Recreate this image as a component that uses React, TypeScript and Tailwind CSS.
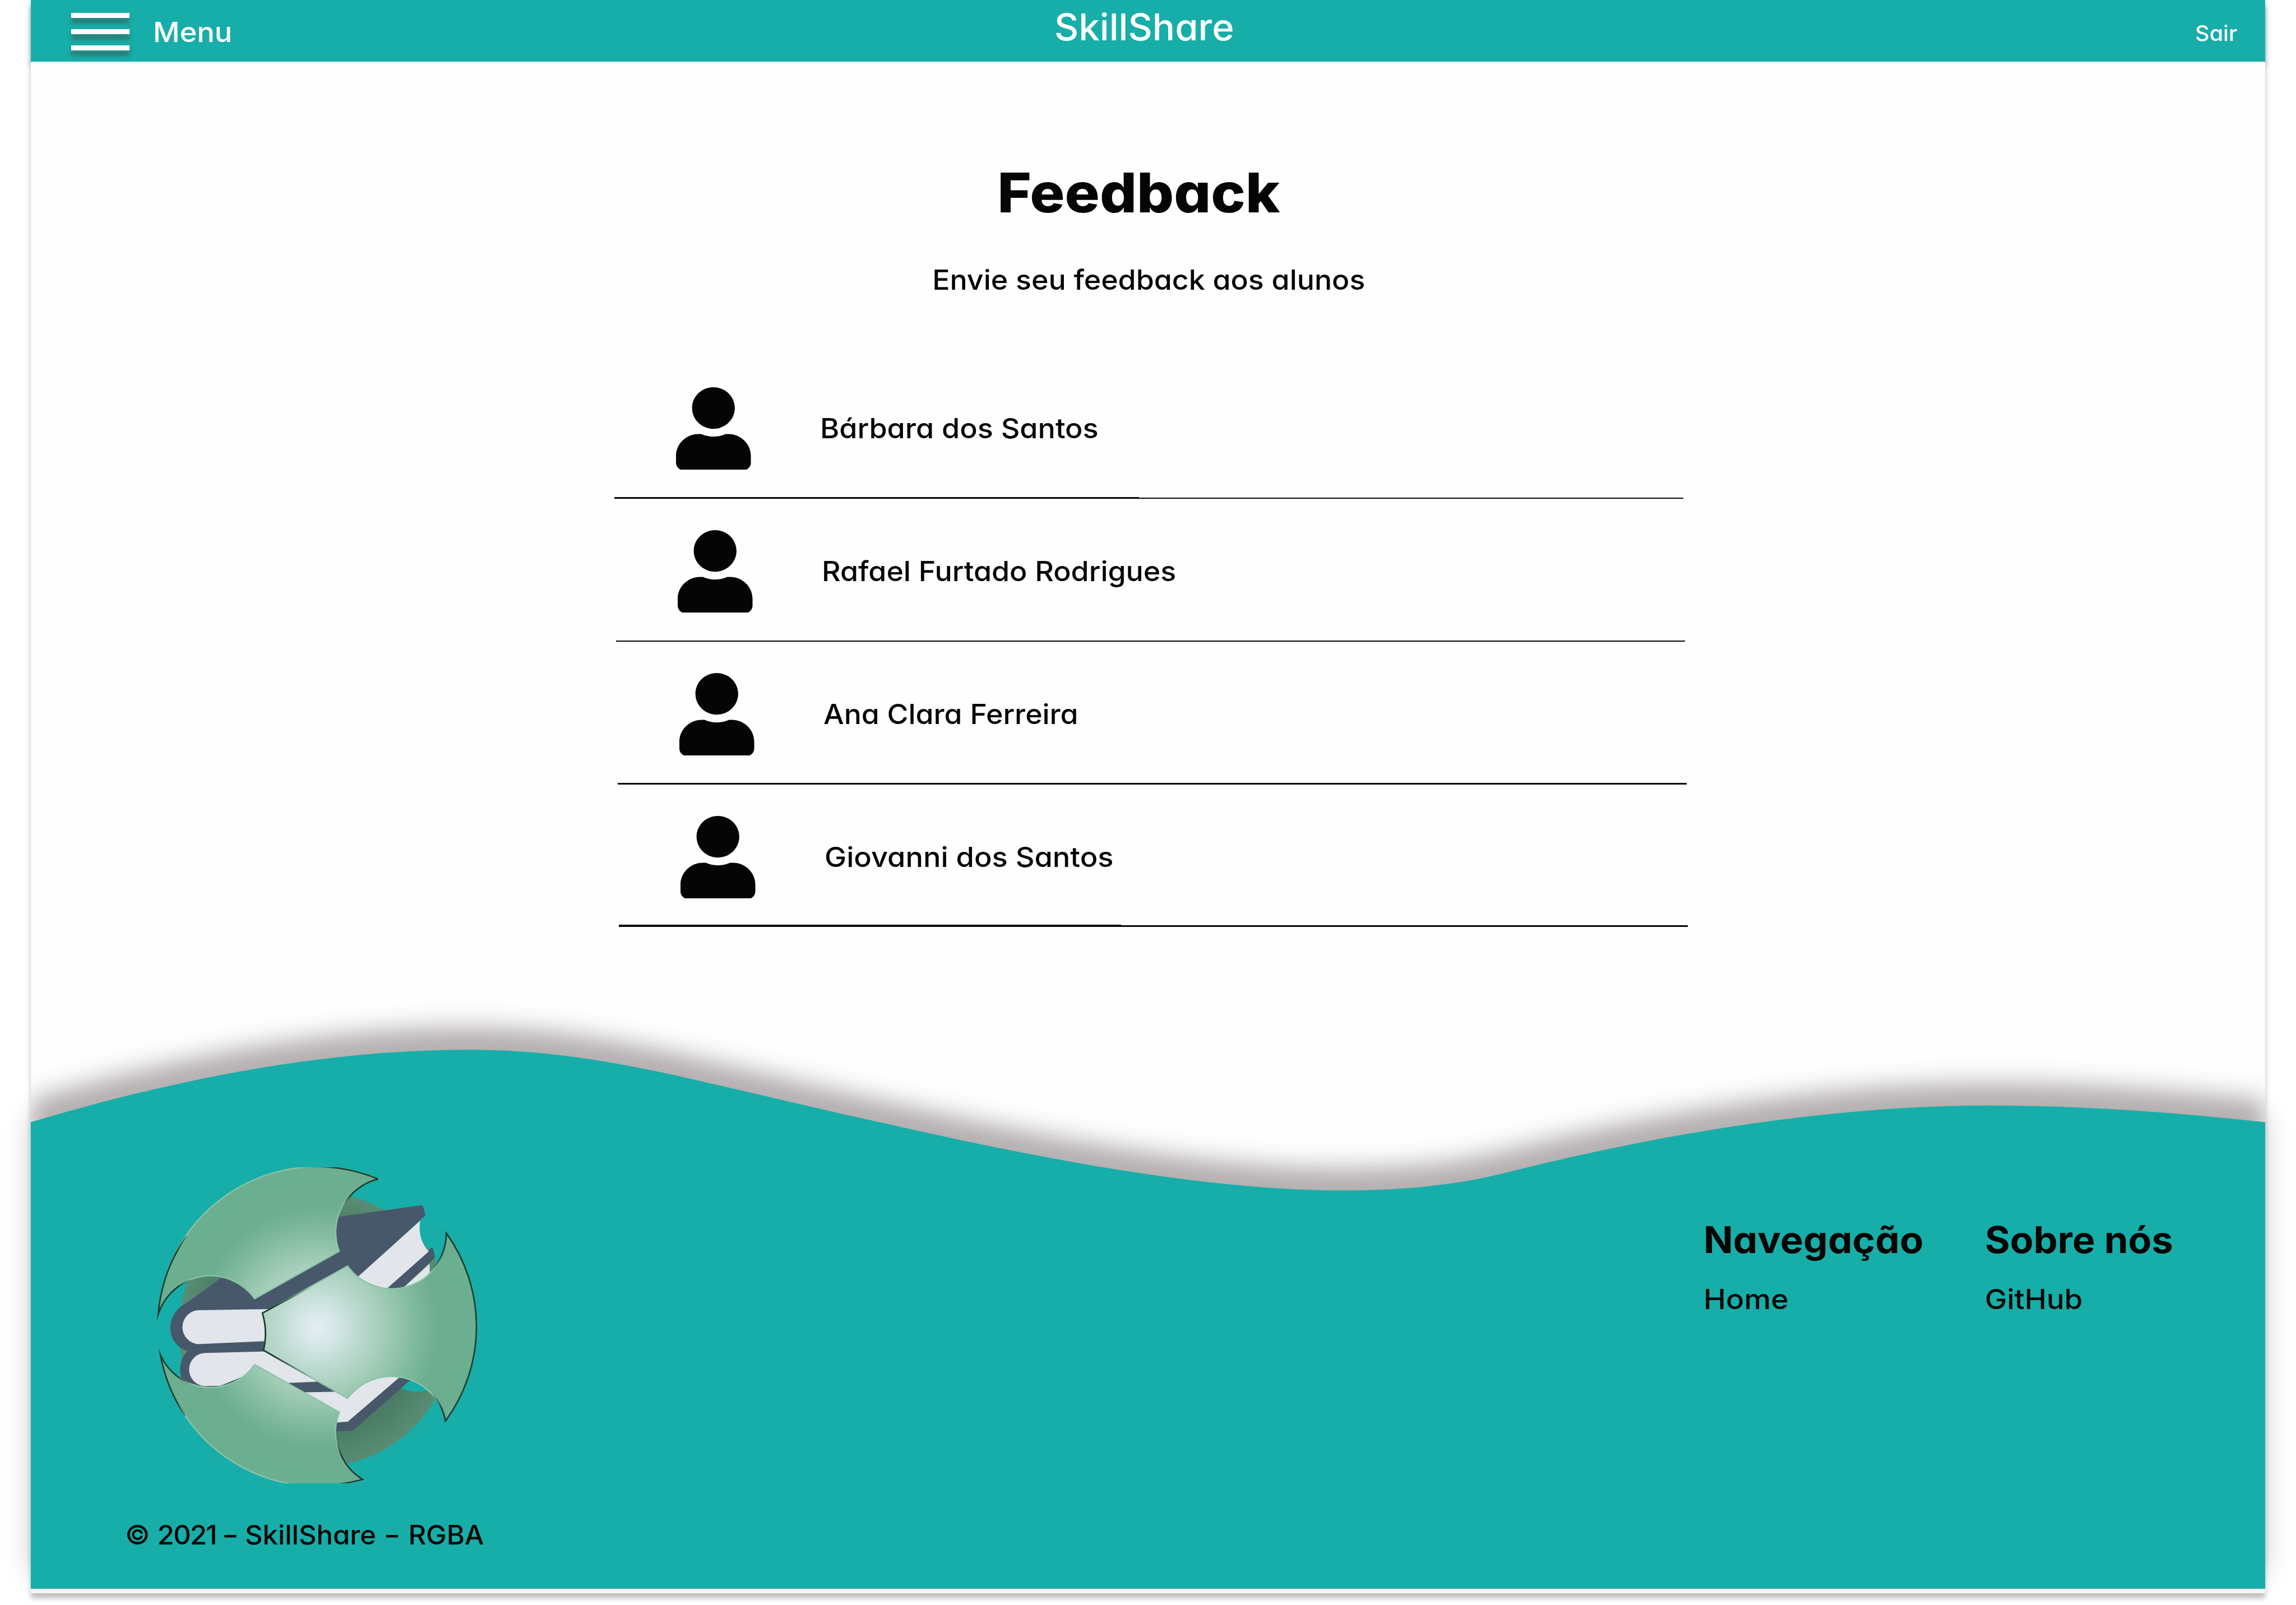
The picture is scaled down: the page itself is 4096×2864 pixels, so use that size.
type Student = {
  name: string;
  row: string;
  text: string;
  line: React.ReactNode;
};

const students: Student[] = [
  {
    name: "Bárbara dos Santos",
    row: "h-[255px] ml-0",
    text: "scale-x-[1.042]",
    line: (
      <>
        <div className="h-[3px] w-[936px] bg-[#050505]" />
        <div className="h-[2px] grow bg-[#050505]" />
      </>
    ),
  },
  {
    name: "Rafael Furtado Rodrigues",
    row: "h-[255px] ml-[3px]",
    text: "scale-x-[1.038]",
    line: <div className="h-[2px] grow bg-[#050505]" />,
  },
  {
    name: "Ana Clara Ferreira",
    row: "h-[255px] ml-[6px]",
    text: "scale-x-[1.035]",
    line: <div className="h-[3px] grow bg-[#050505]" />,
  },
  {
    name: "Giovanni dos Santos",
    row: "h-[254px] ml-[8px]",
    text: "scale-x-[1.047]",
    line: (
      <>
        <div className="h-[4px] w-[896px] bg-[#050505]" />
        <div className="h-[3px] grow bg-[#050505]" />
      </>
    ),
  },
];

function UserIcon() {
  return (
    <svg
      className="mt-[56px] h-[147px] w-[133.5px] shrink-0"
      viewBox="0 0 448 507"
      preserveAspectRatio="none"
      fill="#050505"
    >
      <path d="M224 256c70.7 0 128-57.3 128-128S294.7 0 224 0 96 57.3 96 128s57.3 128 128 128zm89.6 32h-16.7c-22.2 10.2-46.9 16-72.9 16s-50.6-5.8-72.9-16h-16.7C60.2 288 0 348.2 0 422.4V464c0 26.5 21.5 48 48 48h352c26.5 0 48-21.5 48-48v-41.6c0-74.2-60.2-134.4-134.4-134.4z" />
    </svg>
  );
}

function Wave() {
  return (
    <svg
      className="absolute inset-0 h-full w-full"
      viewBox="73 2300 5281 1456"
      preserveAspectRatio="none"
    >
      <defs>
        <filter id="waveShadow" filterUnits="userSpaceOnUse" x="-60" y="2250" width="5560" height="1560" colorInterpolationFilters="sRGB">
          <feDropShadow dx="0" dy="-53" stdDeviation="28" floodColor="#150508" floodOpacity="0.32" />
        </filter>
      </defs>
      <path
        filter="url(#waveShadow)"
        fill="#17aea9"
        d="M73 2653C400 2556 750 2481.700 1110 2481.700C1290 2481.700 1444 2509.500 1594 2541.700C2090 2654 2700 2814.300 3174.600 2814.300C3320 2814.300 3440 2802 3556 2773.300C3886 2690 4300 2613.800 4698.600 2613.800C4920 2613.800 5130 2629 5354 2653V3800H73Z"
      />
    </svg>
  );
}

function Logo() {
  return (
    <svg className="h-[619px] w-[619px]" viewBox="0 0 1568 1568" fill="none">
      <defs>
        <radialGradient id="blade" gradientUnits="userSpaceOnUse" cx="785" cy="800" r="722">
          <stop offset="0" stopColor="#e4edf6" />
          <stop offset="0.1" stopColor="#d8e8ea" />
          <stop offset="0.25" stopColor="#bddad0" />
          <stop offset="0.45" stopColor="#9dc9b3" />
          <stop offset="0.6" stopColor="#82bb9f" />
          <stop offset="0.75" stopColor="#6dae90" />
          <stop offset="1" stopColor="#6bae90" />
        </radialGradient>
        <radialGradient id="disc" gradientUnits="userSpaceOnUse" cx="780" cy="810" r="622">
          <stop offset="0.75" stopColor="#4b7c65" />
          <stop offset="1" stopColor="#588d74" />
        </radialGradient>
        <linearGradient id="fadeRight" gradientUnits="userSpaceOnUse" x1="1300" y1="0" x2="1345" y2="0">
          <stop offset="0" stopColor="#1c3e32" stopOpacity="0" />
          <stop offset="1" stopColor="#1c3e32" />
        </linearGradient>
        <linearGradient id="fadeInner" gradientUnits="userSpaceOnUse" x1="760" y1="0" x2="590" y2="0">
          <stop offset="0" stopColor="#1c3e32" stopOpacity="0" />
          <stop offset="1" stopColor="#1c3e32" />
        </linearGradient>
        <linearGradient id="fadeLeft" gradientUnits="userSpaceOnUse" x1="215" y1="0" x2="150" y2="0">
          <stop offset="0" stopColor="#1c3e32" stopOpacity="0" />
          <stop offset="1" stopColor="#1c3e32" />
        </linearGradient>
        <linearGradient id="fadeTop" gradientUnits="userSpaceOnUse" x1="750" y1="0" x2="830" y2="0">
          <stop offset="0" stopColor="#1c3e32" stopOpacity="0" />
          <stop offset="1" stopColor="#1c3e32" />
        </linearGradient>
        <linearGradient id="fadeUpper" gradientUnits="userSpaceOnUse" x1="0" y1="250" x2="0" y2="200">
          <stop offset="0" stopColor="#1c3e32" stopOpacity="0" />
          <stop offset="1" stopColor="#1c3e32" />
        </linearGradient>
        <linearGradient id="fadeLower" gradientUnits="userSpaceOnUse" x1="0" y1="1310" x2="0" y2="1380">
          <stop offset="0" stopColor="#1c3e32" stopOpacity="0" />
          <stop offset="1" stopColor="#1c3e32" />
        </linearGradient>
        <clipPath id="frame">
          <rect x="0" y="76" width="1568" height="1428" />
        </clipPath>
      </defs>
      <g clipPath="url(#frame)">
        <circle cx="780" cy="810" r="622" fill="url(#disc)" />
        {/* notch between the disc and the right blade */}
        <path d="M1163 1075Q1218 1098 1277 1086L1320 1110L1420 1000L1180 1000Z" fill="#17aea9" />

        {/* upper arm */}
        <path
          d="M860 302L1248 248Q1259 247 1262 256L1272 292L960 580L900 600L540 760L240 760L190 690L345 578L420 560L620 600L860 440Z"
          fill="#47586b"
        />
        <path d="M965 572L1248 317Q1234 400 1290 460L1100 640L1000 640Z" fill="#e2e5ea" />
        <path d="M1085 635L1285 458Q1290 440 1300 440Q1306 441 1308 448L1315 483L1165 625Z" fill="#47586b" />
        <path d="M1290 512L1291 560L1240 640L1150 640Z" fill="#e2e5ea" />

        {/* left joints */}
        <path d="M190 690C142 714 119 758 119 802C119 852 150 894 198 907C170 930 163 962 163 990C163 1012 167 1030 176 1048L300 1080L540 1000L560 700Z" fill="#47586b" />
        <path d="M560 717L240 722A77 77 0 0 0 244 875L560 861Z" fill="#e2e5ea" />

        {/* lower arm */}
        <path d="M555 908L281 915A75 75 0 0 0 276 1065L345 1063L500 1000L860 1231L921 1226L1157 1028L1080 1000L900 1080Z" fill="#e2e5ea" />
        <path d="M640 1051L785 1045L880 1090L728 1093Z" fill="#47586b" />
        <path d="M850 1231L920 1226L1160 1020L1205 1036L948 1263Q944 1267 936 1267L850 1270Z" fill="#47586b" />

        {/* blades */}
        <g fill="url(#blade)" stroke="#8ac4a7" strokeWidth="6">
          <path d="M500 670L882 455A246 246 0 0 1 1060 128A722 722 0 0 0 64 740A246 246 0 0 1 500 670Z" />
          <path d="M500 968L883 1183A244 244 0 0 0 990 1487A722 722 0 0 1 74 924A246 246 0 0 0 500 968Z" />
          <path d="M535 735L920 522A246 246 0 0 0 1366 374A722 722 0 0 1 1362 1223A248 248 0 0 0 920 1120L540 903Q560 820 535 735Z" />
        </g>

        {/* dark rims */}
        <g strokeWidth="7" strokeLinejoin="miter" strokeMiterlimit="12">
          <path d="M1290 552A246 246 0 0 0 1366 374A722 722 0 0 1 1362 1223A248 248 0 0 0 1290 1088" stroke="url(#fadeRight)" />
          <path d="M760 613L535 735Q560 820 540 903L760 1029" stroke="url(#fadeInner)" />
          <path d="M190 389A722 722 0 0 0 64 740A246 246 0 0 1 215 583" stroke="url(#fadeLeft)" />
          <path d="M185 1198A722 722 0 0 1 74 924A246 246 0 0 0 215 1056" stroke="url(#fadeLeft)" />
          <path d="M750 74A722 722 0 0 1 1056 128" stroke="url(#fadeTop)" />
          <path d="M1060 128A246 246 0 0 0 900 250" stroke="url(#fadeUpper)" />
          <path d="M873 1320A244 244 0 0 0 988 1487Q936 1501 880 1508" stroke="url(#fadeLower)" />
        </g>
      </g>
    </svg>
  );
}

const bar =
  "h-[9px] w-[104px] bg-white shadow-[0_9px_9px_rgba(64,64,58,0.55)]";

export default function App() {
  return (
    <div className="relative h-[2864px] w-[4096px] overflow-hidden bg-white font-['Inter',sans-serif] leading-none font-[450] text-[#050505] [font-feature-settings:'cv11']">
      {/* soft glow around the footer's sides */}
      <div className="absolute top-[2010px] left-[55px] h-[820px] w-[3986px] shadow-[0_-24px_46px_rgba(0,0,0,0.2)]" />

      <div className="relative mx-auto h-[2843px] w-[3986px] bg-[#fefefe] shadow-[0_9px_9px_rgba(0,0,0,0.25)]">
        <header className="flex h-[110px] items-start bg-[#17aea9] text-white shadow-[0_9px_9px_rgba(0,0,0,0.25)]">
          <div className="flex w-[1826px] items-start">
            <div className="mt-[23px] ml-[72px] flex flex-col gap-[20px]">
              <div className={bar} />
              <div className={bar} />
              <div className={bar} />
            </div>
            <span className="mt-[32px] ml-[42px] origin-left scale-x-[1.045] text-[50px]">Menu</span>
          </div>
          <span className="mt-[15px] origin-left scale-x-[1.016] text-[66px]">SkillShare</span>
          <span className="mt-[40px] mr-[50px] ml-auto origin-right scale-x-[1.04] text-[38px]">Sair</span>
        </header>

        <main className="relative flex h-[1626px] flex-col bg-[#fefefe] pt-[185px]">
          <h1 className="mr-[33px] scale-x-[1.058] self-center text-[98px] font-extrabold">Feedback</h1>
          <p className="mt-[81px] ml-[2px] scale-x-[1.037] self-center text-[50px]">Envie seu feedback aos alunos</p>
          <ul className="mt-[111px] ml-[1041px] w-[1907px]">
            {students.map((s) => (
              <li key={s.name} className={`${s.row} flex w-[1907px] flex-col justify-between`}>
                <div className="flex items-start pl-[110px]">
                  <UserIcon />
                  <span className={`${s.text} mt-[104px] ml-[123px] origin-left text-[50px]`}>{s.name}</span>
                </div>
                <div className="flex items-end">{s.line}</div>
              </li>
            ))}
          </ul>
        </main>

        <footer className="relative h-[1099px]">
          <Wave />
          <div className="relative flex items-start">
            <div className="w-[2984px] pt-[317px]">
              <div className="ml-[202px]">
                <Logo />
              </div>
              <p className="mt-[43px] ml-[168px] w-max origin-left scale-x-[1.02] text-[48px]">
                © <span className="tracking-[-1.8px]">2021</span>
                <span className="mr-[15px] ml-[13px] inline-block scale-x-[1.35]">-</span>
                SkillShare
                <span className="mr-[17px] ml-[17px] inline-block scale-x-[1.35]">-</span>
                RGBA
              </p>
            </div>
            <nav className="flex w-[502px] flex-col items-start pt-[443px]">
              <h2 className="origin-left scale-x-[1.05] text-[66px] font-[750]">Navegação</h2>
              <a className="mt-[48px] origin-left scale-x-[1.075] text-[50px]">Home</a>
            </nav>
            <nav className="flex flex-col items-start pt-[443px]">
              <h2 className="origin-left scale-x-[1.036] text-[66px] font-[750]">Sobre nós</h2>
              <a className="mt-[48px] origin-left scale-x-[1.055] text-[50px]">GitHub</a>
            </nav>
          </div>
        </footer>
        <div className="h-[8px] bg-[#f8f7f6]" />
      </div>
    </div>
  );
}
